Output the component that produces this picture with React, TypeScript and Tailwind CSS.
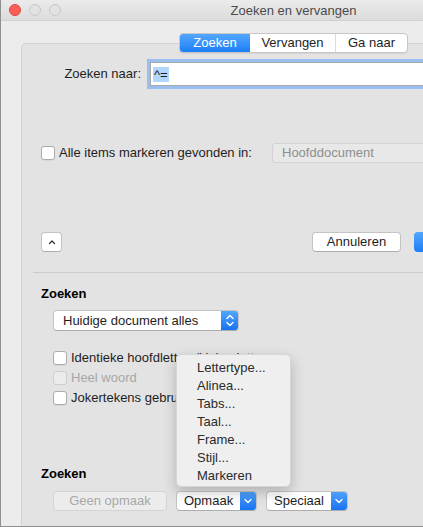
import React from 'react';

const Checkbox = ({ disabled = false }: { disabled?: boolean }) => (
  <span
    className={`block w-[14px] h-[14px] rounded-[3px] border shrink-0 ${
      disabled
        ? 'bg-[#ebebeb] border-[#cfcfcf]'
        : 'bg-white border-[#adadad] shadow-[0_1px_0_rgba(0,0,0,0.05)]'
    }`}
  />
);

const ChevronDown = () => (
  <svg width="8" height="6" viewBox="0 0 8 6" fill="none">
    <path d="M1 1.5L4 4.5L7 1.5" stroke="white" strokeWidth="1.4" strokeLinecap="round" strokeLinejoin="round" />
  </svg>
);

const Stepper = () => (
  <svg width="8" height="13" viewBox="0 0 8 13" fill="none">
    <path d="M1 4.5L4 1.5L7 4.5" stroke="white" strokeWidth="1.4" strokeLinecap="round" strokeLinejoin="round" />
    <path d="M1 8.5L4 11.5L7 8.5" stroke="white" strokeWidth="1.4" strokeLinecap="round" strokeLinejoin="round" />
  </svg>
);

const PopButton = ({ label, width }: { label: string; width: string }) => (
  <div
    className={`${width} h-[20px] flex rounded-[4px] border border-[#c4c4c4] border-b-[#acacac] bg-white overflow-hidden ml-[9px]`}
  >
    <span className="flex-1 flex items-center pl-[7px] text-[#1e1e1e]">{label}</span>
    <span className="w-[16px] flex items-center justify-center bg-gradient-to-b from-[#4ea2fc] to-[#1672f1]">
      <ChevronDown />
    </span>
  </div>
);

const menuItems = ['Lettertype...', 'Alinea...', 'Tabs...', 'Taal...', 'Frame...', 'Stijl...', 'Markeren'];

export default function App() {
  return (
    <div className="relative w-[423px] h-[527px] overflow-hidden bg-[#ececec] font-['Liberation_Sans',Arial,sans-serif] text-[13px] text-[#1e1e1e]">
      <div className="w-[586px] h-[527px] flex flex-col bg-[#ececec] border-l border-b border-[#8f8f8f]">
        {/* title bar */}
        <div className="relative h-[21px] flex items-center justify-center border-b border-[#d1d1d1] bg-gradient-to-b from-[#ebebeb] to-[#dcdcdc]">
          <div className="absolute left-[8px] top-[4px] flex gap-[8px]">
            <span className="w-[12px] h-[12px] rounded-full bg-[#fc5f57] border border-[#e0443e]" />
            <span className="w-[12px] h-[12px] rounded-full bg-[#e2e2e2] border border-[#c8c8c8]" />
            <span className="w-[12px] h-[12px] rounded-full bg-[#e2e2e2] border border-[#c8c8c8]" />
          </div>
          <span className="text-[#4b4b4b] leading-none">Zoeken en vervangen</span>
        </div>

        {/* body */}
        <div className="flex-1 flex flex-col pt-[12px]">
          {/* tabs */}
          <div className="relative z-10 ml-[178px] w-[229px] h-[20px] flex rounded-[4px] border border-[#c6c6c6] bg-white overflow-hidden shadow-[0_1px_0_rgba(0,0,0,0.06)]">
            <span className="w-[70px] flex items-center justify-center text-white bg-gradient-to-b from-[#52a6fd] to-[#1a7ef5]">Zoeken</span>
            <span className="w-[86px] flex items-center justify-center border-r border-[#dcdcdc]">Vervangen</span>
            <span className="flex-1 flex items-center justify-center">Ga naar</span>
          </div>

          {/* panel */}
          <div className="ml-[20px] -mt-[10px] flex-1 flex flex-col bg-[#e3e3e3] border-l border-t border-[#d3d3d3] rounded-tl-[5px]">
            <div className="mt-[18px] h-[24px] flex items-center">
              <span className="w-[119px] text-right">Zoeken naar:</span>
              <div className="ml-[9px] flex-1 h-[24px] flex items-center bg-white border border-[#a9a9a9] shadow-[0_0_0_3px_#98bff0] pl-[2px]">
                <span className="bg-[#b3d6fd] px-[1px] leading-[15px]">^=</span>
              </div>
            </div>

            <div className="mt-[57px] h-[20px] flex items-center pl-[19px]">
              <Checkbox />
              <span className="ml-[4px] w-[213px] whitespace-nowrap">Alle items markeren gevonden in:</span>
              <div className="w-[280px] h-[20px] flex items-center pl-[9px] rounded-[3px] bg-[#e8e8e8] border border-[#d2d2d2] text-[#8e8e8e]">
                Hoofddocument
              </div>
            </div>

            <div className="mt-[69px] h-[20px] flex items-center pl-[19px]">
              <div className="w-[21px] h-[20px] flex items-center justify-center rounded-[4px] bg-white border border-[#c4c4c4] border-b-[#acacac]">
                <svg width="8" height="6" viewBox="0 0 8 6" fill="none">
                  <path d="M1.5 4.5L4 2L6.5 4.5" stroke="#333" strokeWidth="1.3" strokeLinecap="round" strokeLinejoin="round" />
                </svg>
              </div>
              <div className="ml-[250px] w-[89px] h-[20px] flex items-center justify-center rounded-[4px] bg-white border border-[#c4c4c4] border-b-[#acacac]">
                Annuleren
              </div>
              <div className="ml-[13px] w-[89px] h-[20px] flex items-center justify-center rounded-[4px] text-white bg-gradient-to-b from-[#52a6fd] to-[#1a7ef5]">
                Zoeken
              </div>
            </div>

            <div className="mt-[20px] ml-[11px] h-px bg-[#cbcbcb]" />

            <div className="mt-[13px] pl-[19px] font-bold leading-[16px] text-black">Zoeken</div>

            <div className="mt-[8px] ml-[31px] w-[186px] h-[21px] flex rounded-[4px] bg-white border border-[#c4c4c4] border-b-[#acacac] overflow-hidden">
              <span className="flex-1 flex items-center pl-[9px]">Huidige document alles</span>
              <span className="w-[17px] flex items-center justify-center bg-gradient-to-b from-[#52a6fd] to-[#1672f1]">
                <Stepper />
              </span>
            </div>

            <div className="mt-[17px] flex flex-col pl-[31px]">
              <div className="h-[20px] flex items-center">
                <Checkbox />
                <span className="ml-[4px] whitespace-nowrap">Identieke hoofdletters/kleine letters</span>
              </div>
              <div className="h-[20px] flex items-center">
                <Checkbox disabled />
                <span className="ml-[4px] text-[#a7a7a7]">Heel woord</span>
              </div>
              <div className="h-[20px] flex items-center">
                <Checkbox />
                <span className="ml-[4px] whitespace-nowrap">Jokertekens gebruiken</span>
              </div>
            </div>

            <div className="mt-[58px] pl-[19px] font-bold leading-[16px] text-black">Zoeken</div>

            <div className="mt-[9px] pl-[31px] flex">
              <div className="w-[114px] h-[20px] flex items-center justify-center rounded-[4px] bg-[#ececec] border border-[#d4d4d4] text-[#a8a8a8]">
                Geen opmaak
              </div>
              <PopButton label="Opmaak" width="w-[81px]" />
              <PopButton label="Speciaal" width="w-[82px]" />
            </div>
          </div>
        </div>
      </div>

      {/* popup menu */}
      <div className="absolute left-[176px] top-[354px] w-[115px] h-[133px] pt-[4px] rounded-[5px] bg-[#efefef] border border-[#d6d6d6] shadow-[0_5px_14px_rgba(0,0,0,0.22)]">
        {menuItems.map((item) => (
          <div key={item} className="h-[18px] leading-[18px] pl-[20px] text-[#2b2b2b]">
            {item}
          </div>
        ))}
      </div>
    </div>
  );
}
